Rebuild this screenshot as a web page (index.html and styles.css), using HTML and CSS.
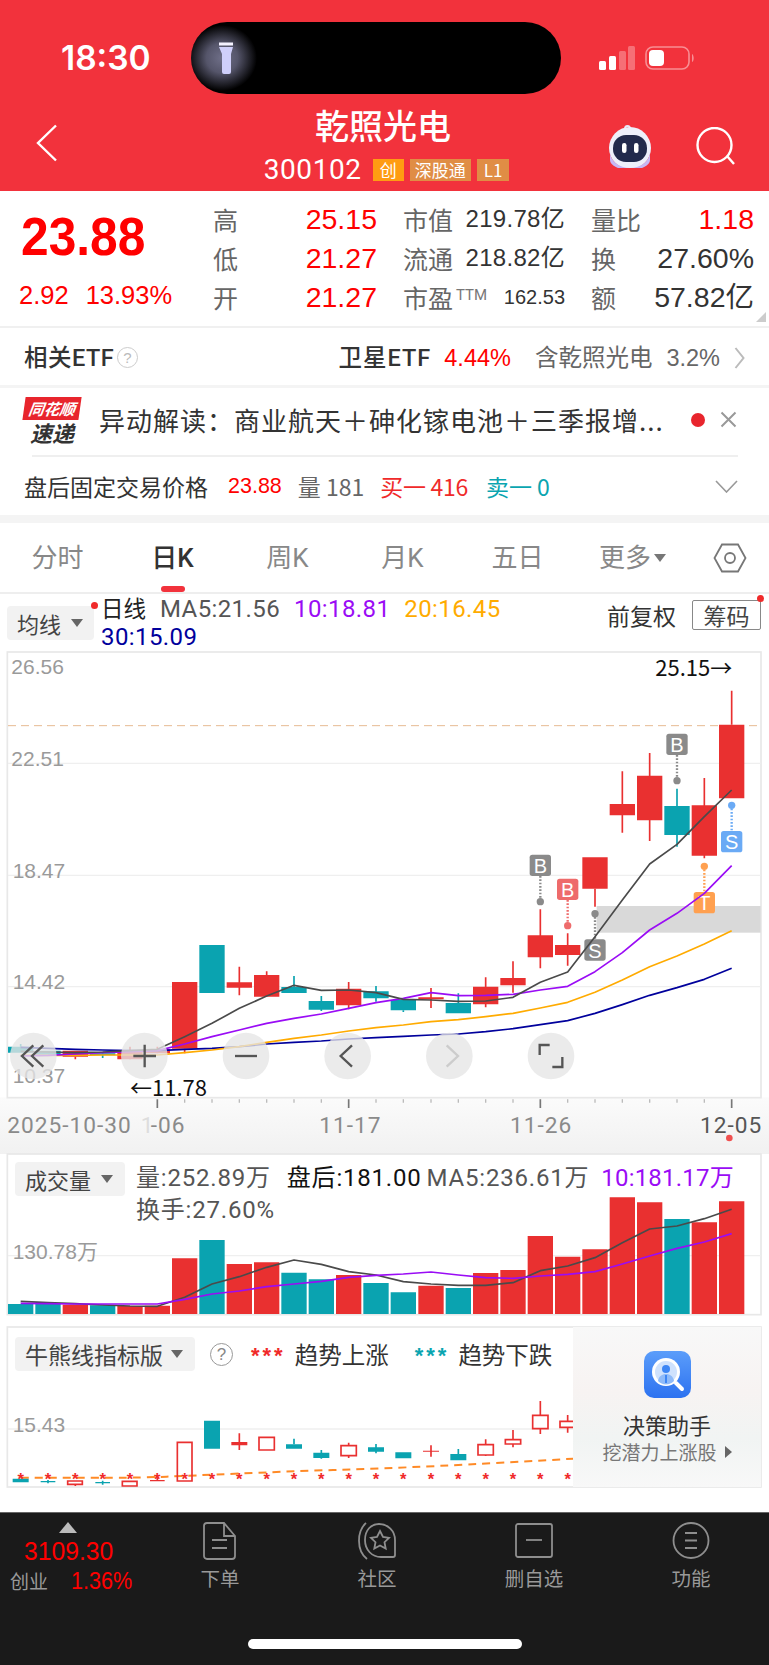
FILE: index.html
```html
<!DOCTYPE html>
<html lang="zh">
<head>
<meta charset="utf-8">
<title>乾照光电</title>
<link rel="stylesheet" href="styles.css">
</head>
<body>
<div class="page">
  <header class="header">
    <div class="status">
      <div class="time">18:30</div>
      <div class="island">
        <div class="glow"></div>
        <svg class="torch" width="16" height="34" viewBox="0 0 16 34"><path d="M1 1.500h14v3H1z" fill="#f4f2ff"/><path d="M1 6h14l-2 7v18a2 2 0 0 1-2 2H6a2 2 0 0 1-2-2V13z" fill="#cfcffa"/></svg>
      </div>
      <svg class="signal" width="36" height="24" viewBox="0 0 36 24"><rect x="0" y="15" width="7" height="9" rx="1.500" fill="#fff"/><rect x="10" y="10" width="7" height="14" rx="1.500" fill="#fff"/><rect x="20" y="5" width="7" height="19" rx="1.500" fill="#fff" opacity=".3"/><rect x="29" y="0" width="7" height="24" rx="1.500" fill="#fff" opacity=".3"/></svg>
      <svg class="battery" width="50" height="24" viewBox="0 0 50 24"><rect x="1" y="1" width="43" height="22" rx="7" fill="none" stroke="#fff" stroke-opacity=".45" stroke-width="1.600"/><rect x="4" y="4" width="15" height="16" rx="4" fill="#fff"/><path d="M47 8c2 1 2.500 7 0 8z" fill="#fff" fill-opacity=".45"/></svg>
    </div>
    <nav class="nav">
      <svg class="back" width="22" height="38" viewBox="0 0 22 38"><path d="M20 1.500 2 19l18 17.500" fill="none" stroke="#fff" stroke-width="2.400"/></svg>
      <div class="title-block">
        <div class="title">乾照光电</div>
        <div class="subline">
          <span class="code">300102</span>
          <span class="tag tag-a">创</span>
          <span class="tag tag-b">深股通</span>
          <span class="tag tag-b tag-l">L1</span>
        </div>
      </div>
      <svg class="robot" width="48" height="44" viewBox="0 0 48 44"><path d="M19 5c0-4 5-4 5 0" fill="none" stroke="#e8e8f8" stroke-width="2"/><circle cx="24" cy="24" r="21" fill="#eef0fb"/><path d="M4 28a20 16 0 0 0 40 0v8a20 10 0 0 1-40 0z" fill="#c7b8f5"/><rect x="7" y="11" width="34" height="27" rx="13" fill="#222a4c"/><rect x="16" y="19" width="4.500" height="10" rx="2.200" fill="#fff"/><rect x="28" y="19" width="4.500" height="10" rx="2.200" fill="#fff"/></svg>
      <svg class="search" width="40" height="38" viewBox="0 0 40 38"><circle cx="18.500" cy="18" r="17" fill="none" stroke="#fff" stroke-width="2.400"/><path d="M31 29l7 8" stroke="#fff" stroke-width="2.400"/></svg>
    </nav>
  </header>

  <section class="quote">
    <div class="quote-main">
      <div class="price">23.88</div>
      <div class="change"><span>2.92</span><span>13.93%</span></div>
    </div>
    <div class="quote-grid">
      <div class="cell"><span class="lab">高</span><span class="up">25.15</span></div>
      <div class="cell"><span class="lab">市值</span><span class="val">219.78亿</span></div>
      <div class="cell"><span class="lab">量比</span><span class="up">1.18</span></div>
      <div class="cell"><span class="lab">低</span><span class="up">21.27</span></div>
      <div class="cell"><span class="lab">流通</span><span class="val">218.82亿</span></div>
      <div class="cell"><span class="lab">换</span><span class="val big">27.60%</span></div>
      <div class="cell"><span class="lab">开</span><span class="up">21.27</span></div>
      <div class="cell"><span class="lab">市盈<sup class="ttm">TTM</sup></span><span class="val small">162.53</span></div>
      <div class="cell"><span class="lab">额</span><span class="val big">57.82亿</span></div>
    </div>
    <div class="corner"></div>
  </section>

  <section class="etf">
    <div class="etf-left">相关ETF <span class="help">?</span></div>
    <div class="etf-right">
      <span class="etf-name">卫星ETF</span><span class="etf-up">4.44%</span>
      <span class="etf-hold">含乾照光电</span><span class="etf-hold">3.2%</span>
      <svg width="11" height="22" viewBox="0 0 11 22"><path d="M1.500 1 9.500 11 1.500 21" fill="none" stroke="#bbb" stroke-width="2"/></svg>
    </div>
  </section>

  <section class="alert">
    <div class="logo">
      <div class="logo-top"><span>同花顺</span></div>
      <div class="logo-bot">速递</div>
    </div>
    <div class="alert-text">异动解读：商业航天＋砷化镓电池＋三季报增...</div>
    <div class="alert-dot"></div>
    <svg width="17" height="17" viewBox="0 0 17 17"><path d="M1.500 1.500 15.500 15.500M15.500 1.500 1.500 15.500" stroke="#999" stroke-width="2"/></svg>
  </section>

  <section class="fixed">
    <span class="fx-title">盘后固定交易价格</span>
    <span class="fx-price">23.88</span>
    <span class="fx-gray">量 181</span>
    <span class="fx-red">买一 416</span>
    <span class="fx-teal">卖一 0</span>
    <svg class="fx-chev" width="23" height="13" viewBox="0 0 23 13"><path d="M1 1 11.500 12 22 1" fill="none" stroke="#999" stroke-width="1.600"/></svg>
  </section>

  <div class="band"></div>

  <div class="tabs">
    <div class="tab">分时</div>
    <div class="tab active">日K</div>
    <div class="tab">周K</div>
    <div class="tab">月K</div>
    <div class="tab">五日</div>
    <div class="tab">更多<span class="mini-arrow"></span></div>
    <div class="tab">
      <svg width="34" height="30" viewBox="0 0 34 30"><path d="M9 1.500h16L32.500 15 25 28.500H9L1.500 15z" fill="none" stroke="#777" stroke-width="1.800"/><circle cx="17" cy="15" r="5" fill="none" stroke="#777" stroke-width="1.800"/></svg>
    </div>
  </div>

  <div class="legend">
    <div class="chip chip-main">均线<span class="chip-arrow"></span><i class="reddot chip-dot"></i></div>
    <div class="legend-text">
      <span class="lg-dark">日线</span><span class="lg-gray">MA5:21.56</span><span class="lg-purple">10:18.81</span><span class="lg-orange">20:16.45</span><span class="lg-navy">30:15.09</span>
    </div>
    <div class="legend-right">
      <span class="fq">前复权</span>
      <span class="chouma">筹码<i class="reddot chouma-dot"></i></span>
    </div>
  </div>

  <section class="price-chart">
    <svg class="chart price-svg" viewBox="0 36 2307 1506">
      <defs>
        <linearGradient id="axisbg" x1="0" y1="0" x2="0" y2="1"><stop offset="0" stop-color="#fbfbfb"/><stop offset="1" stop-color="#f1f1f1"/></linearGradient>
      </defs>
      <rect x="0" y="1372" width="2307" height="170" fill="url(#axisbg)"/>
      <rect x="22" y="36" width="2261" height="1337" fill="#fff" stroke="#e8e8e8" stroke-width="5"/>
      <path d="M24 370H2282M24 706H2282M24 1040H2282" stroke="#efefef" stroke-width="4"/>
      <path d="M24 257H2282" stroke="#e6bb92" stroke-width="3" stroke-dasharray="24 15"/>
      <rect x="1790" y="798" width="492" height="80" fill="#d9d9d9"/>
      <g class="ax">
        <text x="34" y="101">26.56</text>
        <text x="34" y="378">22.51</text>
        <text x="38" y="714">18.47</text>
        <text x="38" y="1048">14.42</text>
        <text x="38" y="1328">10.37</text>
      </g>
      <path class="r-w" d="M226 1250V1258M390 1220V1258M472 1220V1240M554 1226V1240M718 980V1066M800 994V1005M1046 1026V1108M1293 1044V1104M1457 1012V1102M1539 964V1058M1621 808V985M1703 880V977M1785 746V800M1867 394V578M1949 339V603M2113 414V655M2195 152V254"/>
      <path class="t-w" d="M62 1212V1220M308 1240V1254M882 1008V1041M964 1068V1113M1128 1038V1085M1210 1111V1116M1375 1060V1089M2031 446V620"/>
      <path class="r-b" d="M188 1232h76v18h-76zM352 1232h76v26h-76zM434 1228h76v12h-76zM516 1026h76v200h-76zM680 1027h76v16h-76zM762 1005h76v65h-76zM1008 1046h76v50h-76zM1255 1072h76v6h-76zM1419 1040h76v53h-76zM1501 1014h76v22h-76zM1583 886h76v66h-76zM1665 915h76v30h-76zM1747 652h76v94h-76zM1829 492h76v34h-76zM1911 407h76v134h-76zM2075 496h76v151h-76zM2157 254h76v221h-76z"/>
      <path class="t-b" d="M24 1220h76v18h-76zM106 1232h76v12h-76zM270 1240h76v6h-76zM598 915h76v144h-76zM844 1041h76v18h-76zM926 1083h76v26h-76zM1090 1054h76v21h-76zM1172 1080h76v31h-76zM1337 1089h76v31h-76zM1993 498h76v87h-76z"/>

      <g class="badge-g">
        <path class="dots" d="M1621 708V785"/><circle cx="1621" cy="785" r="11"/><rect x="1589" y="644" width="64" height="64" rx="8"/>
        <path class="dots" d="M2031 345V422"/><circle cx="2031" cy="422" r="11"/><rect x="1999" y="281" width="64" height="64" rx="8"/>
        <path class="dots" d="M1785 821V898"/><circle cx="1785" cy="821" r="11"/><rect x="1753" y="898" width="64" height="64" rx="8"/>
      </g>
      <g class="badge-p">
        <path class="dots" d="M1703 780V857"/><circle cx="1703" cy="857" r="11"/><rect x="1671" y="716" width="64" height="64" rx="8"/>
      </g>
      <g class="badge-o">
        <path class="dots" d="M2113 679V756"/><circle cx="2113" cy="679" r="11"/><rect x="2081" y="756" width="64" height="64" rx="8"/>
      </g>
      <g class="badge-b">
        <path class="dots" d="M2195 496V573"/><circle cx="2195" cy="496" r="11"/><rect x="2163" y="573" width="64" height="64" rx="8"/>
      </g>
      <g class="badge-t">
        <text x="1621" y="699">B</text><text x="2031" y="336">B</text><text x="1785" y="953">S</text>
        <text x="1703" y="771">B</text><text x="2113" y="811">T</text><text x="2195" y="628">S</text>
      </g>

      <polyline class="ma30" points="62,1222 144,1225 226,1228 308,1230 390,1232 472,1232 554,1228 636,1225 718,1220 800,1212 882,1207 964,1203 1046,1197 1128,1193 1210,1189 1293,1185 1375,1182 1457,1175 1539,1166 1621,1154 1703,1142 1785,1120 1867,1094 1949,1066 2031,1043 2113,1018 2195,985"/>
      <polyline class="ma20" points="62,1246 144,1246 226,1246 308,1245 390,1245 472,1245 554,1238 636,1230 718,1220 800,1207 882,1195 964,1185 1046,1173 1128,1163 1210,1155 1293,1145 1375,1139 1457,1130 1539,1120 1621,1104 1703,1087 1785,1057 1867,1020 1949,980 2031,948 2113,912 2195,872"/>
      <polyline class="ma10" points="62,1248 144,1246 226,1242 308,1238 390,1235 472,1232 554,1212 636,1190 718,1170 800,1150 882,1135 964,1122 1046,1105 1128,1088 1210,1075 1293,1058 1375,1067 1457,1066 1539,1063 1621,1050 1703,1039 1785,995 1867,938 1949,870 2031,820 2113,760 2195,677"/>
      <polyline class="ma5" points="62,1234 144,1236 226,1238 308,1236 390,1232 472,1228 554,1190 636,1150 718,1105 800,1068 882,1036 964,1051 1046,1050 1128,1058 1210,1078 1293,1080 1375,1084 1457,1083 1539,1072 1621,1027 1703,996 1785,890 1867,780 1949,672 2031,613 2113,530 2195,450"/>

      <text class="tip" x="390" y="1368">←11.78</text>
      <text class="tip" x="1966" y="108">25.15→</text>

      <g class="btn">
        <circle cx="100" cy="1248" r="70"/><circle cx="433" cy="1248" r="70"/><circle cx="738" cy="1248" r="70"/><circle cx="1043" cy="1248" r="70"/><circle cx="1348" cy="1248" r="70"/><circle cx="1653" cy="1248" r="70"/>
      </g>
      <g class="btn-icon">
        <path d="M100 1216 66 1248l34 32M130 1216 96 1248l34 32"/>
        <path d="M400 1248h68M434 1214v68"/>
        <path d="M705 1248h66"/>
        <path d="M1056 1216 1022 1248l34 32"/>
        <path class="dim" d="M1340 1216l34 32-34 32"/>
        <path d="M1619 1245v-30h30M1687 1251v30h-30"/>
      </g>

      <path class="tick" d="M554 1378v10M636 1378v10M718 1378v10M800 1378v10M882 1378v10M964 1378v10M1128 1378v10M1210 1378v10M1293 1378v10M1375 1378v10M1457 1378v10M1539 1378v10M1703 1378v10M1785 1378v10M1867 1378v10M1949 1378v10M2031 1378v10M2113 1378v10"/>
      <path class="tick-big" d="M472 1378v26M1046 1378v26M1621 1378v26M2195 1378v26"/>
      <g class="date">
        <text x="22" y="1480">2025-10-30</text>
        <text x="452" y="1480">-06</text>
        <text class="faded" x="422" y="1480">1</text>
        <text x="958" y="1480">11-17</text>
        <text x="1530" y="1480">11-26</text>
        <text class="date-end" x="2100" y="1480">12-05</text>
      </g>
      <circle cx="2188" cy="1494" r="10" fill="#f05050"/>
    </svg>
  </section>

  <section class="vol-panel">
    <svg class="chart vol-svg" viewBox="0 42 2307 519">
      <rect x="22" y="42" width="2261" height="482" fill="#fff" stroke="#e8e8e8" stroke-width="5"/>
      <path d="M24 347H2282" stroke="#efefef" stroke-width="4"/>
      <path class="r-b" d="M188 494h76v28h-76zM352 498h76v24h-76zM434 497h76v25h-76zM516 355h76v167h-76zM680 372h76v150h-76zM762 367h76v155h-76zM1008 405h76v117h-76zM1255 437h76v85h-76zM1419 399h76v123h-76zM1501 390h76v132h-76zM1583 288h76v234h-76zM1665 350h76v172h-76zM1747 328h76v194h-76zM1829 172h76v350h-76zM1911 187h76v335h-76zM2075 247h76v275h-76zM2157 184h76v338h-76z"/>
      <path class="t-b" d="M24 492h76v30h-76zM106 492h76v30h-76zM270 496h76v26h-76zM598 300h76v222h-76zM844 398h76v124h-76zM926 418h76v104h-76zM1090 429h76v93h-76zM1172 457h76v65h-76zM1337 444h76v78h-76zM1993 237h76v285h-76z"/>
      <polyline class="ma5" points="62,484 144,488 226,491 308,495 390,498 472,499 554,472 636,432 718,410 800,382 882,360 964,373 1046,395 1128,405 1210,425 1293,432 1375,436 1457,436 1539,428 1621,392 1703,378 1785,353 1867,308 1949,267 2031,258 2113,236 2195,208"/>
      <polyline class="ma10" points="62,490 144,491 226,492 308,492 390,492 472,492 554,478 636,462 718,453 800,440 882,432 964,424 1046,412 1128,406 1210,402 1293,396 1375,405 1457,413 1539,415 1621,408 1703,403 1785,395 1867,372 1949,348 2031,325 2113,306 2195,281"/>
      <text class="ax" x="38" y="356">130.78万</text>
    </svg>
    <div class="panel-legend">
      <div class="chip chip-vol">成交量<span class="chip-arrow"></span></div>
      <div class="vol-text">
        <span class="lg-gray vol-first">量:252.89万</span><span class="lg-black vol-after">盘后:181.00</span><span class="lg-gray">MA5:236.61万</span><span class="lg-purple vol-ten">10:181.17万</span><span class="lg-gray">换手:27.60%</span>
      </div>
    </div>
  </section>

  <section class="bull-panel">
    <svg class="chart bull-svg" viewBox="0 561 2307 555">
      <rect x="22" y="561" width="2261" height="480" fill="#fff" stroke="#e8e8e8" stroke-width="5"/>
      <path d="M24 867H2282" stroke="#efefef" stroke-width="4"/>
      <text class="ax" x="38" y="876">15.43</text>
      <path class="dash" d="M62 1013C300 1014 400 1014 500 1010S800 996 1000 990 1400 975 1719 956"/>
      <path class="t-b" d="M38 1016h48v11h-48zM122 1023h44v4h-44zM286 1026h44v4h-44zM612 842h48v84h-48zM858 913h48v13h-48zM940 938h48v16h-48zM1104 922h48v13h-48zM1186 937h48v18h-48zM1351 942h48v19h-48z"/>
      <path class="t-w" d="M144 1020v10M308 1022v12M882 896v17M964 930v26M1128 912v28M1375 927v15"/>
      <path class="r-b" d="M450 1020h44v4h-44zM694 906h48v10h-48zM1269 932h48v3h-48z"/>
      <path class="r-w" d="M472 1012v8M718 880v50M1293 916v34"/>
      <path class="r-o" d="M203 1023h44v10h-44zM367 1024h44v14h-44zM532 907h44v116h-44zM777 892h46v38h-46zM1023 917h46v30h-46zM1434 914h46v31h-46zM1516 899h46v13h-46zM1598 826h46v40h-46zM1680 844h46v18h-46z"/>
      <path class="r-w" d="M1046 908v9M1046 947v7M1457 898v16M1457 945v3M1539 870v29M1539 912v10M1621 783v43M1621 866v16M1703 825v19M1703 862v16M226 1033v5"/>
      <g class="stars">
        <text x="62" y="1034">*</text><text x="144" y="1034">*</text><text x="226" y="1034">*</text><text x="308" y="1034">*</text><text x="390" y="1034">*</text><text x="472" y="1034">*</text><text x="554" y="1034">*</text><text x="636" y="1034">*</text><text x="718" y="1034">*</text><text x="800" y="1034">*</text><text x="882" y="1034">*</text><text x="964" y="1034">*</text><text x="1046" y="1034">*</text><text x="1128" y="1034">*</text><text x="1210" y="1034">*</text><text x="1293" y="1034">*</text><text x="1375" y="1034">*</text><text x="1457" y="1034">*</text><text x="1539" y="1034">*</text><text x="1621" y="1034">*</text><text x="1703" y="1034">*</text>
      </g>
    </svg>
    <div class="panel-legend bull-legend">
      <div class="chip chip-bull">牛熊线指标版<span class="chip-arrow"></span></div>
      <span class="help help-big">?</span>
      <span class="bull-stars bull-up">***</span><span class="bull-txt">趋势上涨</span>
      <span class="bull-stars bull-down">***</span><span class="bull-txt">趋势下跌</span>
    </div>
    <aside class="assist">
      <svg class="assist-icon" width="47" height="47" viewBox="0 0 47 47">
        <defs><linearGradient id="ai" x1="0" y1="0" x2="0" y2="1"><stop offset="0" stop-color="#5b9dfa"/><stop offset="1" stop-color="#2d72f0"/></linearGradient></defs>
        <rect width="47" height="47" rx="10" fill="url(#ai)"/>
        <circle cx="22" cy="21" r="14" fill="#fff"/><circle cx="22" cy="21" r="11" fill="#cfe2fd"/>
        <circle cx="22" cy="18" r="4" fill="#3d86f5"/>
        <path d="M14 30c1-5 4-7 8-7s7 2 8 7a11 11 0 0 1-16 0z" fill="#8fbbf9"/>
        <path d="M21 24h2v8h-2z" fill="#3d86f5"/>
        <path d="M32 32l6 6" stroke="#fff" stroke-width="4" stroke-linecap="round"/>
      </svg>
      <div class="assist-title">决策助手</div>
      <div class="assist-sub">挖潜力上涨股<span class="assist-arrow"></span></div>
    </aside>
  </section>

  <footer class="tabbar">
    <div class="tabrow">
      <div class="index">
        <div class="idx-arrow"></div>
        <div class="idx-num">3109.30</div>
        <div class="idx-line"><span class="idx-name">创业</span><span class="idx-pct">1.36%</span></div>
      </div>
      <div class="tb-item">
        <svg class="tb-icon" width="34" height="38" viewBox="0 0 34 38"><path d="M4 1h17l11 13v20a3 3 0 0 1-3 3H4a3 3 0 0 1-3-3V4a3 3 0 0 1 3-3zM21 1v13h11" fill="none"/><path d="M9 18h15M9 26h15" fill="none"/></svg>
        <span>下单</span>
      </div>
      <div class="tb-item">
        <svg class="tb-icon" width="40" height="38" viewBox="0 0 40 38"><path d="M9 1C0 9-1 28 10 37" fill="none"/><path d="M8 18C8 8 14 2 22 2c9 0 16 7 16 16v15a2 2 0 0 1-2 2H24C15 35 8 28 8 18z" fill="none"/><path d="M23 9l3 6 6 .8-4.500 4.400 1.200 6.300L23 23.500l-5.700 3 1.200-6.300L14 15.800l6-.8z" fill="none"/></svg>
        <span>社区</span>
      </div>
      <div class="tb-item">
        <svg class="tb-icon" width="38" height="38" viewBox="0 0 38 38"><rect x="1" y="2" width="36" height="33" rx="2" fill="none"/><path d="M11 18h16" fill="none"/></svg>
        <span>删自选</span>
      </div>
      <div class="tb-item">
        <svg class="tb-icon" width="38" height="38" viewBox="0 0 38 38"><ellipse cx="19" cy="18.500" rx="17.500" ry="17.500" fill="none"/><path d="M13 11h12M13 18.500h12M13 26h12" fill="none"/></svg>
        <span>功能</span>
      </div>
    </div>
    <div class="home"></div>
  </footer>
</div>
</body>
</html>
```

FILE: styles.css
```css
* { box-sizing: border-box; }
html, body { margin: 0; padding: 0; background: #fff; }
body { font-family: "Liberation Sans", "Noto Sans CJK SC", sans-serif; color: #333; }
.page { width: 769px; height: 1665px; overflow: hidden; position: relative; }

/* header */
.header { height: 191px; background: #f2323c; color: #fff; }
.status { display: flex; align-items: center; padding: 22px 0 0 61px; height: 94px; }
.time { width: 129.600px; font: 600 33.500px Inter, sans-serif; }
.island { width: 370px; height: 72px; border-radius: 36px; background: #000; position: relative; display: flex; align-items: center; padding-left: 27px; overflow: hidden; }
.glow { position: absolute; left: -4px; top: 3px; width: 70px; height: 66px; border-radius: 50%; background: radial-gradient(closest-side, #6f6f88 0, #55556a 45%, rgba(60,60,80,0) 100%); }
.torch { position: relative; }
.signal { margin-left: 38px; }
.battery { margin-left: 10px; }
.nav { height: 97px; display: grid; grid-template-columns: 167px 360px 133px 40px; padding-left: 36px; align-items: center; }
.title-block { display: flex; flex-direction: column; align-items: center; margin-top: 1px; }
.title { font: 500 34px/40px "Noto Sans CJK SC", sans-serif; margin-bottom: 4px; }
.subline { display: flex; align-items: center; gap: 6px; height: 24px; margin-top: 9px; padding-left: 7px; }
.code { font: 400 28px/24px Roboto, sans-serif; letter-spacing: .6px; margin-right: 5px; }
.tag { height: 22px; padding: 0 5px; font: 400 17px/22px "Noto Sans CJK SC", sans-serif; background: #e08d45; }
.tag-a { background: #ff9c12; padding: 0 7px; }
.tag-l { padding: 0 7px; }
.robot { margin-left: 43px; margin-top: 6px; }
.search { margin-top: 6px; }

/* quote */
.quote { height: 137px; display: flex; position: relative; border-bottom: 2px solid #f0f0f0; }
.quote-main { width: 213px; padding: 20px 0 0 21px; }
.price { font: 700 54px/50px "Liberation Sans", sans-serif; color: #f00; transform: scaleX(.92); transform-origin: left; }
.change { display: flex; gap: 17px; margin-top: 19px; margin-left: -2px; font: 400 25.500px/30px "Liberation Sans", sans-serif; color: #f00; }
.quote-grid { padding-top: 8px; display: grid; grid-template-columns: 164px 162px 163px; column-gap: 26px; grid-auto-rows: 39px; align-content: start; }
.cell { display: flex; justify-content: space-between; align-items: center; }
.lab { font: 400 25px/30px "Noto Sans CJK SC", sans-serif; color: #666; }
.up { font: 400 28.500px/30px "Liberation Sans", sans-serif; color: #f00; }
.val { font: 400 24px/30px "Liberation Sans", "Noto Sans CJK SC", sans-serif; color: #333; letter-spacing: .3px; }
.val.big { font-size: 28.500px; letter-spacing: 0; }
.val.small { font-size: 20px; letter-spacing: 0; }
.ttm { font: 400 15px/15px Roboto, sans-serif; color: #777; vertical-align: 8px; margin-left: 3px; }
.corner { position: absolute; right: 3px; bottom: 4px; width: 0; height: 0; border-style: solid; border-width: 0 0 10px 10px; border-color: transparent transparent #ccc transparent; }

/* etf */
.etf { height: 60px; display: flex; justify-content: space-between; align-items: center; padding: 2px 24px 0; border-bottom: 3px solid #f4f4f4; }
.etf-left { font: 500 23.500px/26px Roboto, "Noto Sans CJK SC", sans-serif; letter-spacing: .5px; color: #333; display: flex; align-items: center; gap: 3px; }
.help { display: inline-flex; width: 21px; height: 21px; border: 1.500px solid #ccc; border-radius: 50%; align-items: center; justify-content: center; font: 400 15px/1 "Liberation Sans", sans-serif; color: #bbb; }
.etf-right { display: flex; align-items: center; font: 400 23.500px/26px "Liberation Sans", "Noto Sans CJK SC", sans-serif; }
.etf-name { color: #333; font-family: Roboto, "Noto Sans CJK SC", sans-serif; font-weight: 500; letter-spacing: 1px; margin-right: 13px; }
.etf-up { color: #f00; margin-right: 24px; }
.etf-hold { color: #666; margin-right: 14px; }

/* alert */
.alert { height: 67px; margin: 0 24px; padding-bottom: 4px; display: flex; align-items: center; }
.logo { width: 56px; margin-top: 3px; margin-right: 19px; text-align: center; }
.logo-top { height: 23px; background: #e8252d; transform: skewX(-8deg); display: flex; align-items: center; justify-content: center; }
.logo-top span { font: italic 700 15.500px/23px "Noto Sans CJK SC", sans-serif; color: #fff; }
.logo-bot { font: italic 700 22px/25px "Noto Sans CJK SC", sans-serif; color: #333; }
.alert-text { width: 570px; white-space: nowrap; font: 400 26px/34px "Noto Sans CJK SC", sans-serif; letter-spacing: 1px; color: #333; }
.alert-dot { width: 14px; height: 14px; background: #e8252d; border-radius: 50%; margin-left: 22px; margin-right: 15px; }

/* fixed price */
.fixed { height: 60px; margin: 0 31px 0 24px; padding-top: 2px; display: flex; align-items: center; position: relative; font: 400 23px/28px "Noto Sans CJK SC", sans-serif; }
.fixed::before { content: ""; position: absolute; left: 8px; right: 0; top: 0; height: 2px; background: #efefef; }
.fx-title { color: #333; margin-right: 20px; }
.fx-price { font: 400 21.500px/28px "Liberation Sans", sans-serif; color: #f00; margin-right: 16px; }
.fx-gray { color: #666; margin-right: 16px; }
.fx-red { color: #f02a2a; letter-spacing: -.3px; margin-right: 18px; }
.fx-teal { color: #0aa5b0; }
.fx-chev { margin-left: auto; }
.band { height: 8px; background: #f4f4f4; }

/* tabs */
.tabs { height: 71px; display: grid; grid-template-columns: repeat(6, 115px) 79px; border-bottom: 2px solid #eee; }
.tab { display: flex; align-items: center; justify-content: center; font: 400 26px/30px Roboto, "Noto Sans CJK SC", sans-serif; color: #888; position: relative; }
.tab.active { color: #333; font-weight: 500; }
.tab.active::after { content: ""; position: absolute; left: 46px; bottom: 0; width: 24px; height: 6px; border-radius: 3px; background: #f2323c; }
.mini-arrow { display: inline-block; margin-left: 3px; border-style: solid; border-width: 8px 6px 0; border-color: #777 transparent transparent; }

/* legend */
.legend { height: 58px; display: flex; position: relative; padding-left: 7px; }
.chip { display: flex; align-items: center; background: #f2f2f2; border-radius: 4px; color: #444; font: 400 22px/34px "Noto Sans CJK SC", sans-serif; height: 34px; padding-left: 10px; position: relative; white-space: nowrap; }
.chip-main { width: 87px; margin-top: 12px; }
.chip-arrow { display: inline-block; margin-left: 10px; border-style: solid; border-width: 8px 6px 0; border-color: #666 transparent transparent; }
.reddot { position: absolute; width: 7px; height: 7px; border-radius: 50%; background: #f02a2a; }
.chip-dot { right: -4px; top: -4px; }
.legend-text { margin-left: 7px; width: 440px; display: flex; flex-wrap: wrap; column-gap: 14px; font: 400 24px/28px Roboto, "Noto Sans CJK SC", sans-serif; letter-spacing: .4px; align-content: start; padding-top: 1px; }
.lg-dark { color: #222; font-size: 22.500px; letter-spacing: 0; }
.lg-gray { color: #555; }
.lg-black { color: #111; }
.lg-purple { color: #9a0cf5; }
.lg-orange { color: #ffab00; }
.lg-navy { color: #00009c; }
.legend-right { margin-left: auto; display: flex; align-items: flex-start; padding: 6px 8px 0 0; }
.fq { font: 400 23px/30px "Noto Sans CJK SC", sans-serif; color: #333; margin-right: 16px; }
.chouma { width: 69px; height: 30px; border: 1px solid #888; border-radius: 2px; text-align: center; font: 400 23px/28px "Noto Sans CJK SC", sans-serif; color: #444; position: relative; }
.chouma-dot { right: -4px; top: -6px; }

/* charts */
.chart { display: block; width: 769px; overflow: visible; }
.price-svg { height: 502px; }
.vol-svg { height: 173px; }
.bull-svg { height: 185px; }
.chart text { font-family: "Liberation Sans", "Noto Sans CJK SC", sans-serif; }
.ax text, text.ax { font-size: 63px; fill: #9a9a9a; }
.r-w { stroke: #e93030; stroke-width: 5; fill: none; }
.t-w { stroke: #0aa3b0; stroke-width: 5; fill: none; }
.r-b { fill: #e93030; }
.t-b { fill: #0aa3b0; }
.r-o { fill: none; stroke: #e93030; stroke-width: 5; }
.ma5, .ma10, .ma20, .ma30 { fill: none; stroke-width: 5; stroke-linejoin: round; }
.ma5 { stroke: #4a4a4a; }
.ma10 { stroke: #9a0cf5; }
.ma20 { stroke: #ffab00; }
.ma30 { stroke: #00009c; }
.dots { fill: none; stroke-width: 7; stroke-dasharray: 5 5; }
.badge-g { fill: #8a8a8a; } .badge-g .dots { stroke: #8a8a8a; }
.badge-p { fill: #ee6b6b; } .badge-p .dots { stroke: #ee6b6b; }
.badge-o { fill: #ffa050; } .badge-o .dots { stroke: #ffa050; }
.badge-b { fill: #6aaaf5; } .badge-b .dots { stroke: #6aaaf5; }
.chart .badge-t text { font-size: 60px; fill: #fff; text-anchor: middle; }
.chart .tip { font-family: "Noto Sans CJK SC", sans-serif; font-size: 66px; fill: #111; }
.btn { fill: #e6e6e6; fill-opacity: .78; }
.btn-icon path { fill: none; stroke: #555; stroke-width: 7; }
.btn-icon path.dim { stroke: #ccc; }
.tick { stroke: #bbb; stroke-width: 4; fill: none; }
.tick-big { stroke: #777; stroke-width: 5; fill: none; }
.chart .date text { font-family: Roboto, sans-serif; font-size: 68px; letter-spacing: 3px; fill: #8a8a8a; }
.chart .date .date-end { fill: #555; }
.chart .date .faded { fill: #ddd; }
.dash { fill: none; stroke: #ff8a26; stroke-width: 6; stroke-dasharray: 24 18; }
.stars text { font-size: 50px; fill: #f02a2a; text-anchor: middle; font-weight: 700; }

.vol-panel, .bull-panel { position: relative; }
.panel-legend { position: absolute; left: 15px; top: 8px; display: flex; align-items: flex-start; }
.chip-vol { width: 110px; }
.vol-text { margin-left: 11px; width: 620px; display: flex; flex-wrap: wrap; column-gap: 12px; font: 400 24px/32px Roboto, "Noto Sans CJK SC", sans-serif; letter-spacing: .8px; }
.vol-first { margin-right: 4px; }
.vol-after { margin-right: -7px; }
.vol-ten { letter-spacing: .2px; }
.bull-legend { align-items: center; }
.chip-bull { width: 180px; font-size: 23px; }
.chip-bull .chip-arrow { margin-left: 8px; }
.help-big { width: 23px; height: 23px; border-color: #999; color: #888; margin-left: 15px; font-size: 17px; }
.bull-stars { font: 700 22px/34px "Liberation Sans", sans-serif; letter-spacing: 3px; margin-left: 18px; padding-top: 4px; }
.bull-up { color: #f02a2a; }
.bull-down { color: #0aa5b0; margin-left: 26px; }
.bull-txt { font: 400 23.500px/34px "Noto Sans CJK SC", sans-serif; color: #333; margin-left: 9px; }
.assist { position: absolute; left: 573px; top: 0; width: 188px; height: 160px; background: linear-gradient(180deg, #f8f8f8 0, #f7f3f2 40%, #f1f4f3 70%, #f8f8f8 100%); display: flex; flex-direction: column; align-items: center; padding-top: 24px; }
.assist-icon { margin-bottom: 11px; }
.assist-title { font: 400 22px/30px "Noto Sans CJK SC", sans-serif; color: #333; }
.assist-sub { font: 400 19px/26px "Noto Sans CJK SC", sans-serif; color: #777; display: flex; align-items: center; gap: 8px; }
.assist-arrow { border-style: solid; border-width: 6px 0 6px 7px; border-color: transparent transparent transparent #666; }

/* tabbar */
.tabbar { height: 153px; background: #1a1a1a; border-top: 1px solid #666; position: absolute; left: 0; right: 0; bottom: 0; }
.tabrow { height: 126px; display: grid; grid-template-columns: 141.500px repeat(4, 157px); }
.index { padding-top: 9px; }
.idx-arrow { width: 0; height: 0; margin-left: 59px; border-style: solid; border-width: 0 9px 11px; border-color: transparent transparent #bbb; }
.idx-num { margin-top: 3px; margin-left: 24px; font: 400 26px/30px "Liberation Sans", sans-serif; color: #f00; transform: scaleX(.95); transform-origin: left; }
.idx-line { margin-top: 1px; margin-left: 10px; display: flex; align-items: center; gap: 23px; }
.idx-name { font: 400 19px/28px "Noto Sans CJK SC", sans-serif; color: #999; }
.idx-pct { font: 400 24px/28px "Liberation Sans", sans-serif; color: #f00; transform: scaleX(.9); transform-origin: left; }
.tb-item { display: flex; flex-direction: column; align-items: center; padding-top: 9px; color: #999; font: 400 19.500px/28px "Noto Sans CJK SC", sans-serif; }
.tb-icon { margin-bottom: 4px; }
.tb-icon path, .tb-icon rect, .tb-icon ellipse { stroke: #8e8e8e; stroke-width: 1.800; }
.home { width: 274px; height: 10px; margin: 0 0 0 248px; border-radius: 5px; background: #fff; }
```
